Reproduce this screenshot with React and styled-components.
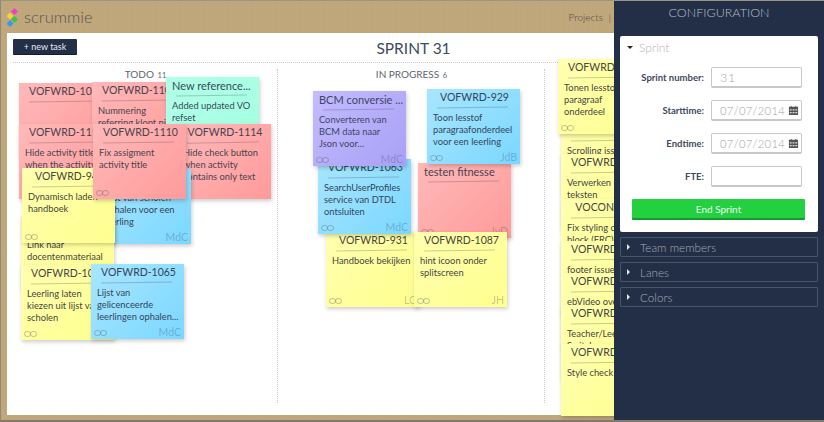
import React from "react";
import styled, { createGlobalStyle } from "styled-components";

const palette = {
  pink: ["#ffb9b9", "#ff9a9a", "#47434f"],
  yellow: ["#ffffb0", "#ffff8e", "#45463f"],
  blue: ["#a8e6ff", "#7bd7ff", "#33445a"],
  green: ["#b0ffe8", "#a4ffe0", "#37495a"],
  purple: ["#c4bcff", "#a8a0f4", "#3f4566"],
};

const todo = [
  { x: 6, y: 20, c: "pink", title: "VOFWRD-1071", body: "" },
  { x: 79, y: 19, c: "pink", title: "VOFWRD-1109", body: "Nummering\nreferring klopt niet" },
  { x: 153, y: 14, c: "green", left: true, title: "New reference...", body: "Added updated VO\nrefset" },
  { x: 6, y: 61, c: "pink", title: "VOFWRD-1111", body: "Hide activity title\nwhen the activity" },
  { x: 164, y: 61, w: 94, c: "pink", title: "VOFWRD-1114", body: "Hide check button\nwhen activity\ncontains only text" },
  { x: 85, y: 106, c: "blue", title: "VOFWRD-1070", body: "Lijst van scholen\nophalen voor een\nleerling", who: "MdC" },
  { x: 8, y: 153, c: "yellow", title: "VOFWRD-1040", body: "Link naar\ndocentenmateriaal" },
  { x: 8, y: 202, c: "yellow", title: "VOFWRD-1064", body: "Leerling laten\nkiezen uit lijst van\nscholen", link: true },
  { x: 9, y: 105, c: "yellow", title: "VOFWRD-945", body: "Dynamisch laden\nhandboek", link: true },
  { x: 80, y: 61, c: "pink", title: "VOFWRD-1110", body: "Fix assigment\nactivity title", link: true },
  { x: 78, y: 201, c: "blue", title: "VOFWRD-1065", body: "Lijst van\ngelicenceerde\nleerlingen ophalen...", link: true, who: "MdC" },
];

const progress = [
  { x: 48, y: 169, c: "yellow", title: "VOFWRD-931", body: "Handboek bekijken", link: true, who: "LC" },
  { x: 40, y: 96, c: "blue", title: "VOFWRD-1063", body: "SearchUserProfiles\nservice van DTDL\nontsluiten", link: true, who: "MdC" },
  { x: 140, y: 100, c: "pink", left: true, title: "testen fitnesse", body: "", link: true, who: "JvD" },
  { x: 149, y: 26, c: "blue", title: "VOFWRD-929", body: "Toon lesstof\nparagraafonderdeel\nvoor een leerling", link: true, who: "JdB" },
  { x: 35, y: 28, c: "purple", left: true, title: "BCM conversie ...", body: "Converteren van\nBCM data naar\nJson voor...", link: true, who: "MdC" },
  { x: 136, y: 169, c: "yellow", title: "VOFWRD-1087", body: "hint icoon onder\nsplitscreen", link: true, who: "JH" },
];

const done = [
  { x: 16, y: 59, c: "yellow", title: "VOFWRD-1012", body: "Scrolling issue\nsplitter" },
  { x: 13, y: -4, c: "yellow", title: "VOFWRD-1005", body: "Tonen lesstof\nparagraaf\nonderdeel", link: true },
  { x: 16, y: 91, c: "yellow", title: "VOFWRD-1021", body: "Verwerken\nteksten" },
  { x: 16, y: 136, c: "yellow", title: "VOCONT-102", body: "Fix styling of\nblock (FRC)" },
  { x: 16, y: 178, c: "yellow", title: "VOFWRD-1033", body: "footer issue" },
  { x: 16, y: 210, c: "yellow", title: "VOFWRD-1034", body: "ebVideo overlay" },
  { x: 16, y: 242, c: "yellow", title: "VOFWRD-1035", body: "Teacher/Leerling\nSwitch" },
  { x: 16, y: 281, c: "yellow", title: "VOFWRD-1036", body: "Style check", tall: true },
];

const GlobalStyle = createGlobalStyle`
  html, body {
    margin: 0;
    padding: 0;
    background: #bfa77b;
    font-family: "Lato", "Liberation Sans", sans-serif;
  }
`;

const Page = styled.div`
  position: relative;
  width: 824px;
  height: 422px;
  overflow: hidden;
  display: flex;
  flex-direction: column;
  box-sizing: border-box;
  padding: 0 0 5px 6px;
  background-color: #bfa77b;
  background-image: repeating-linear-gradient(90deg, rgba(90, 70, 30, 0.025) 0 1px, transparent 1px 3px),
    repeating-linear-gradient(0deg, rgba(255, 240, 200, 0.025) 0 1px, transparent 1px 2px);
  border-top: 1px solid #9a9484;
  border-left: 1px solid #8f8a78;
  border-bottom: 2px solid #7f7a6a;
`;

const TopBar = styled.div`
  height: 32px;
  flex: none;
  display: flex;
  align-items: center;
  justify-content: space-between;
  padding-right: 210px;
  box-sizing: border-box;
`;

const Brand = styled.div`
  display: flex;
  align-items: center;
  color: #555;
  font-size: 16.5px;
  font-weight: 300;
  line-height: 26px;
  margin-top: -1px;
`;

const TopLinks = styled.div`
  font-size: 10px;
  font-weight: 300;
  color: #4f4a3c;
  word-spacing: 3px;
  margin-right: 3px;
`;

const Board = styled.div`
  flex: 1;
  min-height: 0;
  background: #fff;
  display: flex;
  flex-direction: column;
`;

const BoardHead = styled.div`
  height: 29px;
  flex: none;
  position: relative;
  display: flex;
  align-items: center;
  justify-content: center;
  margin: 0 0 0 6px;
  border-bottom: 1px dotted #ccc;
`;

const NewTask = styled.button`
  position: absolute;
  left: 0;
  top: 6px;
  width: 64px;
  height: 16px;
  padding: 0;
  border: none;
  border-bottom: 1px solid #151c2b;
  border-radius: 1px;
  background: #232f46;
  color: #e6e9ee;
  font: 400 9px "Lato", sans-serif;
`;

const SprintTitle = styled.h1`
  margin: 0 10px 0 0;
  font-size: 15.5px;
  font-weight: 400;
  color: #3c4b5e;
`;

const Lanes = styled.div`
  flex: 1;
  min-height: 0;
  display: grid;
  grid-template-columns: 265px 267px 1fr;
  margin-left: 6px;
`;

const Lane = styled.section`
  position: relative;
  &:not(:last-child)::after {
    content: "";
    position: absolute;
    right: 0;
    top: 6px;
    bottom: 12px;
    border-right: 1px dotted #ccc;
  }
`;

const LaneTitle = styled.div`
  text-align: center;
  padding-top: 5px;
  font-size: 10px;
  line-height: 13px;
  color: #5e6570;
  small {
    font-size: 7.5px;
    margin-left: 1px;
  }
`;

const Note = styled.article`
  position: absolute;
  left: ${(p) => p.$x}px;
  top: ${(p) => p.$y}px;
  width: ${(p) => p.$w || 93}px;
  height: ${(p) => (p.$tall ? 72 : 75)}px;
  overflow: hidden;
  box-sizing: border-box;
  padding: 2px 4px 0 6px;
  background: linear-gradient(135deg, ${(p) => palette[p.$c][0]}, ${(p) => palette[p.$c][1]});
  box-shadow: 1px 2px 4px rgba(0, 0, 0, 0.2);
  color: ${(p) => palette[p.$c][2]};
`;

const NoteTitle = styled.div`
  font-size: ${(p) => (p.$left ? 11 : 10.5)}px;
  line-height: 13px;
  text-align: ${(p) => (p.$left ? "left" : "center")};
  white-space: nowrap;
`;

const NoteRule = styled.div`
  height: 1px;
  margin: 3px 8px 4px 4px;
  background: rgba(70, 70, 90, 0.28);
  transform: rotate(-1deg);
`;

const NoteBody = styled.div`
  font-size: 9.3px;
  line-height: 12px;
  white-space: pre;
`;

const NoteLink = styled.svg`
  position: absolute;
  left: 3px;
  bottom: 3px;
  width: 13px;
  height: 6px;
  fill: none;
  stroke: rgba(70, 80, 90, 0.32);
  stroke-width: 1;
`;

const NoteOwner = styled.span`
  position: absolute;
  right: 3px;
  bottom: 1px;
  font-size: 10.5px;
  color: rgba(50, 70, 100, 0.3);
`;

const Panel = styled.aside`
  position: absolute;
  top: -1px;
  right: 0;
  bottom: -2px;
  width: 210px;
  box-sizing: border-box;
  padding: 0 6px;
  background: #232f46;
  display: flex;
  flex-direction: column;
  gap: 5px;
`;

const PanelTitle = styled.div`
  height: 31px;
  line-height: 26px;
  text-align: center;
  font-size: 12.5px;
  font-weight: 300;
  color: #b8bfca;
`;

const OpenCard = styled.div`
  height: 196px;
  background: #fff;
  border-radius: 2px;
  box-sizing: border-box;
  padding: 0 13px 0 12px;
`;

const CardHead = styled.div`
  height: 23px;
  display: flex;
  align-items: center;
  gap: 6px;
  margin-left: -5px;
  color: #b5b5b5;
  font-size: 12px;
  font-weight: 300;
`;

const CaretDown = styled.i`
  width: 0;
  height: 0;
  border-left: 3px solid transparent;
  border-right: 3px solid transparent;
  border-top: 3px solid #222;
`;

const CaretRight = styled.i`
  width: 0;
  height: 0;
  margin-right: 1px;
  border-top: 3px solid transparent;
  border-bottom: 3px solid transparent;
  border-left: 3px solid #e8e8e8;
`;

const Form = styled.div`
  display: grid;
  grid-template-columns: 72px 91px;
  justify-content: start;
  column-gap: 7px;
  row-gap: 12px;
  padding-top: 8px;
`;

const Label = styled.label`
  align-self: center;
  text-align: right;
  white-space: nowrap;
  font-size: 9.5px;
  font-weight: 700;
  color: #3f4a5c;
`;

const Field = styled.div`
  height: 21px;
  box-sizing: border-box;
  display: flex;
  align-items: center;
  justify-content: space-between;
  padding: 0 2px 0 8px;
  border: 1px solid #c8c8c8;
  border-bottom-width: 2px;
  border-radius: 2px;
  font-size: ${(p) => (p.$date ? 11.2 : 12.5)}px;
  font-weight: 300;
  letter-spacing: ${(p) => (p.$date ? 0.35 : 0.8)}px;
  color: #a5a5a5;
`;

const CalendarIcon = styled.svg`
  width: 11px;
  height: 11px;
  flex: none;
  fill: #555;
`;

const EndSprint = styled.button`
  display: block;
  width: 173px;
  height: 21px;
  margin-top: 12px;
  padding: 0;
  border: none;
  border-bottom: 2px solid #159a30;
  border-radius: 1px;
  background: #22d040;
  color: #eafff0;
  font: 400 10px "Lato", sans-serif;
`;

const ClosedCard = styled.div`
  height: 20px;
  box-sizing: border-box;
  display: flex;
  align-items: center;
  gap: 9px;
  padding-left: 6px;
  border: 1px solid #4a5567;
  border-radius: 1px;
  color: #a3abb8;
  font-size: 11.7px;
  font-weight: 300;
`;

const Diamonds = () => (
  <svg width="17" height="26" viewBox="0 0 17 26">
    <rect x="5" y="5" width="5" height="5" transform="rotate(45 7.5 7.5)" fill="#f03fc0" />
    <rect x="0.5" y="9.5" width="5" height="5" transform="rotate(45 3 12)" fill="#f5d52e" />
    <rect x="5" y="13" width="5" height="5" transform="rotate(45 7.5 15.5)" fill="#3cc54a" />
    <rect x="0.5" y="17" width="5" height="5" transform="rotate(45 3 19.5)" fill="#3a96f0" />
  </svg>
);

const Calendar = () => (
  <CalendarIcon viewBox="0 0 12 12">
    <path d="M1 2h2V1h1v1h4V1h1v1h2v9H1z" />
    <path
      d="M2 4.5h2v1.5H2zM5 4.5h2v1.5H5zM8 4.5h2v1.5H8zM2 7.5h2V9H2zM5 7.5h2V9H5zM8 7.5h2V9H8z"
      fill="#ddd"
    />
  </CalendarIcon>
);

const StickyNote = ({ n }) => (
  <Note $x={n.x} $y={n.y} $w={n.w} $c={n.c} $tall={n.tall}>
    <NoteTitle $left={n.left}>{n.title}</NoteTitle>
    <NoteRule />
    <NoteBody>{n.body}</NoteBody>
    {n.link && (
      <NoteLink viewBox="0 0 13 6">
        <rect x="0.5" y="0.5" width="6" height="5" rx="2.5" />
        <rect x="6.5" y="0.5" width="6" height="5" rx="2.5" />
      </NoteLink>
    )}
    {n.who && <NoteOwner>{n.who}</NoteOwner>}
  </Note>
);

const App = () => {
  return (
    <>
      <GlobalStyle />
      <Page>
        <TopBar>
          <Brand>
            <Diamonds />
            scrummie
          </Brand>
          <TopLinks>Projects |</TopLinks>
        </TopBar>
        <Board>
          <BoardHead>
            <NewTask>+ new task</NewTask>
            <SprintTitle>SPRINT 31</SprintTitle>
          </BoardHead>
          <Lanes>
            <Lane>
              <LaneTitle>
                TODO <small>11</small>
              </LaneTitle>
              {todo.map((n) => (
                <StickyNote key={n.title} n={n} />
              ))}
            </Lane>
            <Lane>
              <LaneTitle>
                IN PROGRESS <small>6</small>
              </LaneTitle>
              {progress.map((n) => (
                <StickyNote key={n.title} n={n} />
              ))}
            </Lane>
            <Lane>
              {done.map((n) => (
                <StickyNote key={n.title} n={n} />
              ))}
            </Lane>
          </Lanes>
        </Board>
        <Panel>
          <PanelTitle>CONFIGURATION</PanelTitle>
          <OpenCard>
            <CardHead>
              <CaretDown />
              Sprint
            </CardHead>
            <Form>
              <Label>Sprint number:</Label>
              <Field>31</Field>
              <Label>Starttime:</Label>
              <Field $date>
                07/07/2014
                <Calendar />
              </Field>
              <Label>Endtime:</Label>
              <Field $date>
                07/07/2014
                <Calendar />
              </Field>
              <Label>FTE:</Label>
              <Field />
            </Form>
            <EndSprint>End Sprint</EndSprint>
          </OpenCard>
          <ClosedCard>
            <CaretRight />
            Team members
          </ClosedCard>
          <ClosedCard>
            <CaretRight />
            Lanes
          </ClosedCard>
          <ClosedCard>
            <CaretRight />
            Colors
          </ClosedCard>
        </Panel>
      </Page>
    </>
  );
};

export default App;
